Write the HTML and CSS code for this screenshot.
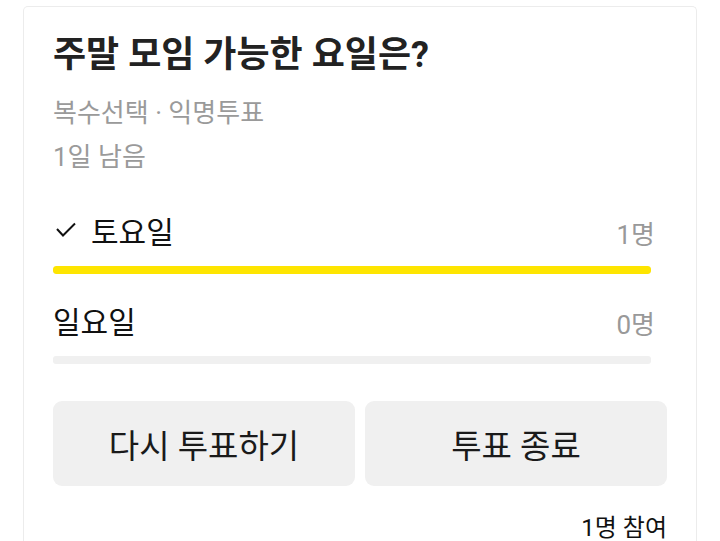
FILE: index.html
```html
<!DOCTYPE html>
<html lang="ko">
<head>
  <meta charset="UTF-8">
  <title>투표</title>
  <link rel="stylesheet" href="styles.css">
</head>
<body>
  <div class="poll-card">
    <div class="poll-head">
      <h1 class="poll-title">주말 모임 가능한 요일은?</h1>
      <div class="poll-meta">복수선택 · 익명투표</div>
      <div class="poll-meta">1일 남음</div>
    </div>

    <div class="poll-options">
      <div class="option">
        <div class="option-row">
          <span class="option-label">
            <svg class="check" width="24" height="16" viewBox="0 0 24 16">
              <path d="M4 7 L10 13.5 L22 1.5" fill="none" stroke="#111" stroke-width="2"/>
            </svg>
            토요일
          </span>
          <span class="option-count">1명</span>
        </div>
        <div class="bar"><div class="bar-fill" style="width: 100%"></div></div>
      </div>
      <div class="option">
        <div class="option-row">
          <span class="option-label">일요일</span>
          <span class="option-count">0명</span>
        </div>
        <div class="bar"><div class="bar-fill" style="width: 0%"></div></div>
      </div>
    </div>

    <div class="poll-actions">
      <button class="btn">다시 투표하기</button>
      <button class="btn">투표 종료</button>
    </div>
    <div class="poll-footer">1명 참여</div>
  </div>
</body>
</html>
```

FILE: styles.css
```css
body {
  margin: 0;
  background: #ffffff;
  font-family: "Roboto", "Noto Sans CJK KR", sans-serif;
  color: #111;
}
.poll-card {
  margin: 6px 23px 0 23px;
  border: 1px solid #ececec;
  border-bottom: none;
  border-radius: 5px 5px 0 0;
  padding: 0 29px;
  height: 540px;
  box-sizing: border-box;
}
.poll-head {
  padding-top: 28px;
}
.poll-title {
  margin: 0 0 16px 0;
  font-size: 36px;
  font-weight: 700;
  color: #222;
  line-height: 40px;
}
.poll-meta {
  font-size: 26px;
  color: #9a9a9a;
  line-height: 44px;
}
.poll-options {
  padding-top: 26px;
  padding-bottom: 1px;
}
.option-row {
  display: flex;
  justify-content: space-between;
  align-items: center;
  height: 50px;
  padding-right: 12px;
}
.option-label {
  display: flex;
  align-items: center;
  gap: 14px;
  font-size: 30px;
  color: #111;
}
.option-count {
  font-size: 26px;
  color: #999;
  padding-top: 4px;
}
.bar {
  margin: 11px 16px 21px 0;
  height: 8px;
  border-radius: 3px;
  background: #f0f0f0;
  overflow: hidden;
}
.bar-fill {
  height: 100%;
  background: #fee500;
  border-radius: 3px;
}
.poll-actions {
  display: flex;
  gap: 10px;
  margin-top: 15px;
}
.btn {
  flex: 1;
  height: 85px;
  border: none;
  border-radius: 9px;
  background: #f0f0f0;
  font-family: inherit;
  font-size: 33px;
  color: #1a1a1a;
}
.poll-footer {
  text-align: right;
  font-size: 24px;
  line-height: 30px;
  color: #111;
  margin-top: 27px;
}
```
